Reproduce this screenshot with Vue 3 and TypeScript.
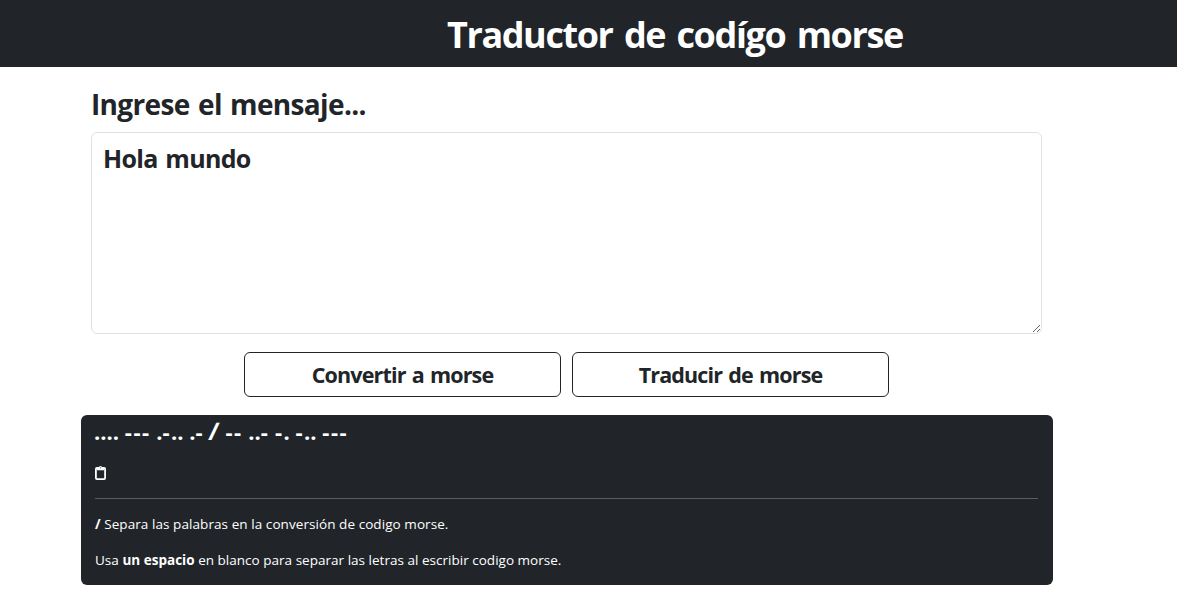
<script setup lang="ts">
import { ref } from 'vue'

const message = ref<string>('Hola mundo')
const result = ref<string>('.... --- .-.. .- / -- ..- -. -.. ---')

const codes: Record<string, string> = {
  a: '.-', b: '-...', c: '-.-.', d: '-..', e: '.', f: '..-.', g: '--.', h: '....', i: '..',
  j: '.---', k: '-.-', l: '.-..', m: '--', n: '-.', o: '---', p: '.--.', q: '--.-', r: '.-.',
  s: '...', t: '-', u: '..-', v: '...-', w: '.--', x: '-..-', y: '-.--', z: '--..', ' ': '/',
}

function toMorse(): void {
  result.value = [...message.value.toLowerCase()].map((c) => codes[c] ?? c).join(' ')
}

function fromMorse(): void {
  const letters = Object.fromEntries(Object.entries(codes).map(([k, v]) => [v, k]))
  result.value = message.value.trim().split(/\s+/).map((c) => letters[c] ?? c).join('')
}

function copy(): void {
  navigator.clipboard?.writeText(result.value)
}
</script>

<template>
  <div class="page">
    <header class="bar"><h1>Traductor de codígo morse</h1></header>
    <main>
      <div class="form">
        <label for="message">Ingrese el mensaje...</label>
        <textarea id="message" v-model="message" spellcheck="false"></textarea>
        <div class="actions">
          <button type="button" @click="toMorse">Convertir a morse</button>
          <button type="button" @click="fromMorse">Traducir de morse</button>
        </div>
      </div>
      <section class="panel">
        <p class="result"><span v-for="(c, i) in result" :key="i" :class="{ dash: c === '-', slash: c === '/' }">{{ c }}</span></p>
        <svg class="copy" viewBox="0 0 12 16" width="12" height="16" @click="copy">
          <rect x=".9" y="3" width="9.2" height="11.1" rx="1" fill="none" stroke="#fff" stroke-width="1.8" />
          <path d="M2 5.3V2.6H3.7Q4 1 5.5 1T7.3 2.6H9V5.3Z" fill="#fff" />
          <circle cx="5.5" cy="2.7" r=".5" fill="#212529" />
        </svg>
        <hr />
        <p class="note first"><b>/</b> Separa las palabras en la conversión de codigo morse.</p>
        <p class="note second">Usa <b>un espacio</b> en blanco para separar las letras al escribir codigo morse.</p>
      </section>
    </main>
  </div>
</template>

<style>
body {
  margin: 0;
  background: #fff;
}
</style>

<style scoped>
.page {
  height: 609px;
  overflow: hidden;
  font-family: "Segoe UI", "Open Sans", "Noto Sans", sans-serif;
  color: #212529;
}
.page * {
  box-sizing: border-box;
}
.bar {
  height: 67px;
  background: #212529;
  color: #fff;
}
h1 {
  margin: 0;
  padding: 11px 0 0 447px;
  font-size: 36px;
  line-height: 48px;
  font-weight: 700;
  letter-spacing: -1.4px;
  word-spacing: 3.4px;
  white-space: nowrap;
}
main {
  width: 972px;
  margin-left: 81px;
}
.form {
  padding: 0 11px 0 10px;
}
label {
  display: block;
  height: 65px;
  padding: 19px 0 0 0;
  font-size: 28px;
  line-height: 36px;
  font-weight: 700;
  letter-spacing: -0.65px;
  word-spacing: 1.7px;
}
textarea {
  display: block;
  width: 951px;
  height: 202px;
  padding: 6px 11px;
  border: 1px solid #dee2e6;
  border-radius: 6px;
  outline: none;
  background: #fff;
  color: #212529;
  font: 700 25px/38px "Segoe UI", "Open Sans", "Noto Sans", sans-serif;
  letter-spacing: -0.7px;
  word-spacing: 2px;
  resize: vertical;
}
.actions {
  display: flex;
  justify-content: center;
  gap: 11px;
  margin-top: 18px;
}
button {
  width: 317px;
  height: 45px;
  padding: 0;
  border: 1px solid #212529;
  border-radius: 6px;
  background: #fff;
  color: #212529;
  font: 700 21.5px/43px "Segoe UI", "Open Sans", "Noto Sans", sans-serif;
  letter-spacing: -0.85px;
  word-spacing: 1.4px;
}
.panel {
  height: 170px;
  margin-top: 18px;
  padding: 0 15px 0 14px;
  border-radius: 6px;
  background: #212529;
  color: #fff;
}
p {
  margin: 0;
  white-space: pre;
}
.result {
  height: 49px;
  margin-left: -1px;
  font-size: 22px;
  line-height: 33px;
  font-weight: 700;
}
.dash {
  letter-spacing: 1.45px;
}
.slash {
  display: inline-block;
  margin: 0 1px 0 -1px;
  font-size: 24px;
  line-height: 20px;
  transform: skewX(-6deg);
}
.copy {
  display: block;
  margin-top: 1px;
}
hr {
  height: 1px;
  margin: 17px 0 15px;
  border: 0;
  background: #595c5f;
}
.note {
  font-size: 13.5px;
  line-height: 21px;
}
.first {
  letter-spacing: 0.07px;
}
.second {
  margin-top: 15px;
  letter-spacing: 0.02px;
}
</style>
